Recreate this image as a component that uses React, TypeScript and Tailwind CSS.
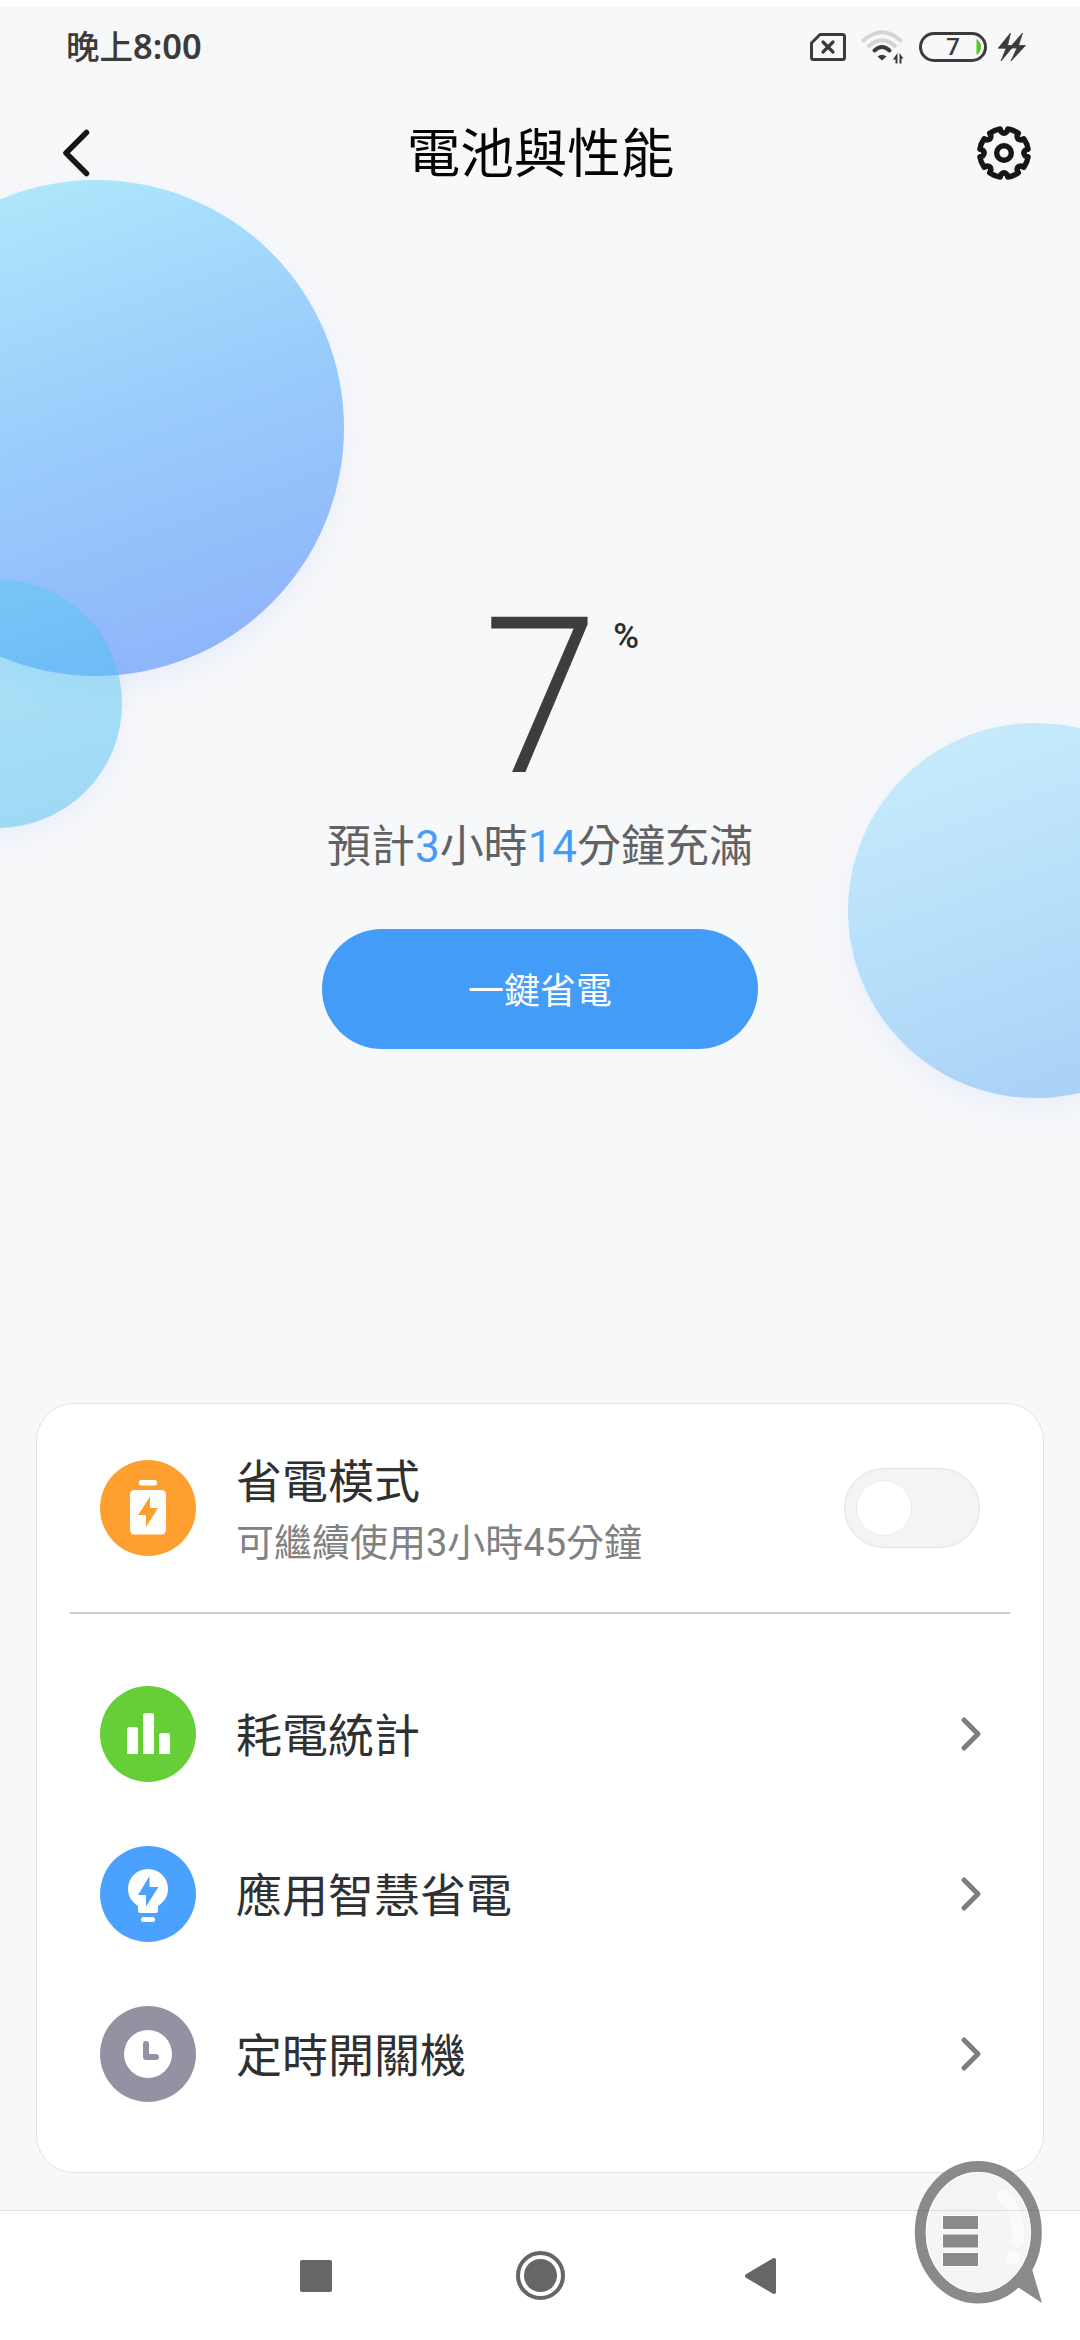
import type { ReactNode } from "react";

const menuItems = [
  { label: "耗電統計", color: "bg-[#66cf38]", icon: <ChartIcon /> },
  { label: "應用智慧省電", color: "bg-[#4ba2fe]", icon: <BulbIcon /> },
  { label: "定時開關機", color: "bg-[#9292a2]", icon: <ClockIcon /> },
];

// Outline of the settings gear: eight teeth with a small notch between each
function gearPath() {
  const point = (radius: number, deg: number) => {
    const rad = (deg * Math.PI) / 180;
    return `${(28 + radius * Math.sin(rad)).toFixed(2)} ${(28 - radius * Math.cos(rad)).toFixed(2)}`;
  };
  let d = `M${point(24.4, 9)}`;
  for (let i = 0; i < 8; i++) {
    const a = i * 45;
    d += `A24.4 24.4 0 0 1 ${point(24.4, a + 36)}`;
    d += `L${point(21.4, a + 37.5)}Q${point(18.6, a + 45)} ${point(21.4, a + 52.5)}L${point(24.4, a + 54)}`;
  }
  return d + "Z";
}

function BatteryIcon() {
  return (
    <svg width="96" height="96" viewBox="0 0 96 96" fill="#fff">
      <rect x="39" y="20" width="18" height="5.5" rx="2" />
      <rect x="30" y="30" width="36" height="44.5" rx="4.5" />
      <path d="M50 36.5 38 55h8v12l12-19h-8z" fill="#ff9f30" />
    </svg>
  );
}

function ChartIcon() {
  return (
    <svg width="96" height="96" viewBox="0 0 96 96" fill="#fff">
      <path d="M27 68V43.500q0-2.500 2.500-2.500h6q2.500 0 2.500 2.500V68z" />
      <path d="M43 68V29.500q0-2.500 2.500-2.500h6q2.500 0 2.500 2.500V68z" />
      <path d="M59 68V49.500q0-2.500 2.500-2.500h6q2.500 0 2.500 2.500V68z" />
    </svg>
  );
}

function BulbIcon() {
  return (
    <svg width="96" height="96" viewBox="0 0 96 96" fill="#fff">
      <path d="M48 23a20 20 0 0 0-20 20c0 7 3.500 12.500 10 17v5q0 2 2 2h16q2 0 2-2v-5c6.500-4.500 10-10 10-17a20 20 0 0 0-20-20z" />
      <rect x="41" y="71" width="14" height="5" rx="2.500" />
      <path d="M49.500 30 38 49h8v11.500L58.500 41h-9z" fill="#4ba2fe" />
    </svg>
  );
}

function ClockIcon() {
  return (
    <svg width="96" height="96" viewBox="0 0 96 96">
      <circle cx="48" cy="48" r="24" fill="#fff" />
      <path d="M46 38v13h10" fill="none" stroke="#9292a2" strokeWidth="6" strokeLinecap="round" strokeLinejoin="round" />
    </svg>
  );
}

function RoundIcon({ color, children }: { color: string; children: ReactNode }) {
  return <div className={`${color} size-24 shrink-0 rounded-full overflow-hidden`}>{children}</div>;
}

function StatusBar() {
  return (
    <div className="flex h-[80px] items-center justify-between pl-[66px] pr-[53px] text-[#3b3b3c]">
      <span className="pb-[2px] text-[33.500px] leading-none font-medium">
        晚上<span className="font-['Noto_Sans',sans-serif] text-[34.500px] font-semibold">8:00</span>
      </span>
      <div className="flex items-center">
        {/* No SIM */}
        <svg className="mr-[14px]" width="38" height="30" viewBox="0 0 38 30" fill="none" stroke="currentColor" strokeWidth="3">
          <path d="M11 2.500h22.500q2 0 2 2v21q0 2-2 2H4.500q-2 0-2-2V11z" strokeLinejoin="round" />
          <path d="M14 10l10 10M24 10L14 20" strokeWidth="3.200" strokeLinecap="round" />
        </svg>
        {/* Wi-Fi */}
        <svg className="mr-[15px]" width="43" height="34" viewBox="0 0 43 34" fill="none" strokeLinecap="round">
          <path d="M2.500 10.500Q21 -6 39.500 10.500" stroke="#d3d4d6" strokeWidth="4" />
          <path d="M8 16Q21 4.500 34 16" stroke="#d3d4d6" strokeWidth="4" />
          <path d="M13.500 20.500Q21 13.500 28.500 20.500" stroke="currentColor" strokeWidth="4" />
          <path d="M16.500 26.500Q21 23 25.500 26.500L21 30.500z" fill="currentColor" />
          <path d="M36.500 23v10.500h-2v-4h-2.700zM38.500 33.500V23l4 5.500h-2v5z" fill="currentColor" />
        </svg>
        <div className="mr-[10px] flex h-[30px] w-[68px] items-center justify-end rounded-full border-3 border-current">
          <span className="w-[42px] pr-[4px] text-center font-[Roboto] text-[24px] leading-none font-medium">7</span>
          <svg className="mr-[3px]" width="5" height="16" viewBox="0 0 5 16">
            <path d="M0.500 0q4.500 3 4.500 8t-4.500 8z" fill="#58c81e" />
          </svg>
        </div>
        {/* Fast charging */}
        <svg width="30" height="30" viewBox="0 0 30 30" fill="currentColor" stroke="currentColor" strokeWidth="0.800">
          <path d="M13.500 1 1.200 16.200h8L4 29l13-15.500h-6.500z" />
          <path d="M25.500 1 12.500 16h7.500l-6 13L28.500 13.500h-7z" />
        </svg>
      </div>
    </div>
  );
}

function TitleBar() {
  return (
    <div className="flex h-[132px] items-center justify-between pl-[60px] pr-[48px]">
      <svg width="32" height="52" viewBox="0 0 32 52" fill="none" stroke="#161616" strokeWidth="5.500" strokeLinecap="round" strokeLinejoin="round">
        <path d="M26.500 5.500 6 26l20.500 20.500" />
      </svg>
      <h1 className="pb-[6px] pl-[13px] text-[53.500px] leading-none text-[#050505]">電池與性能</h1>
      <svg width="56" height="56" viewBox="0 0 56 56" fill="none" stroke="#161616" strokeWidth="5.400">
        <path d={gearPath()} strokeLinejoin="round" />
        <circle cx="28" cy="28" r="7.300" />
      </svg>
    </div>
  );
}

function Bubbles() {
  return (
    <div className="pointer-events-none absolute inset-0 overflow-hidden">
      <div className="absolute left-[-152px] top-[180px] size-[496px] rounded-full bg-linear-[160deg,#afe9fb_8%,#9accfb_50%,#8fb4fa_92%] shadow-[0_12px_28px_rgba(110,145,250,0.1)]" />
      <div className="absolute left-[-127px] top-[579px] size-[249px] rounded-full bg-linear-[165deg,#58cff473,#30b0ee73] shadow-[0_10px_24px_rgba(110,145,250,0.09)]" />
      <div className="absolute left-[848px] top-[723px] size-[375px] rounded-full bg-linear-[160deg,#c6ebfb_8%,#b7dffa_50%,#a9d0f6_92%] shadow-[0_10px_28px_rgba(110,145,250,0.09)]" />
    </div>
  );
}

function ChatButton() {
  return (
    <svg className="absolute left-[912px] top-[2158px]" width="134" height="148" viewBox="0 0 134 148">
      <path d="M119 108 130 145 98 124z" fill="#8a8a8a" />
      <ellipse cx="66.300" cy="74.300" rx="58" ry="65.700" fill="#f3f3f4" fillOpacity="0.85" stroke="#8a8a8a" strokeWidth="11" />
      <ellipse cx="66.300" cy="74.300" rx="52.200" ry="60" fill="none" stroke="#fff" strokeWidth="1" />
      <path d="M91 38q16 12 15 46" fill="none" stroke="#fff" strokeOpacity="0.6" strokeWidth="12" strokeLinecap="round" />
      <circle cx="101" cy="100" r="7" fill="#fff" fillOpacity="0.6" />
      <g fill="#8a8a8a" stroke="#fff">
        <rect x="30.500" y="57.500" width="36" height="14" />
        <rect x="30.500" y="76" width="36" height="14" />
        <rect x="30.500" y="94.500" width="36" height="14" />
      </g>
      <path d="M4 52.500h125" stroke="#000" strokeOpacity="0.08" />
    </svg>
  );
}

export default function App() {
  return (
    <div
      lang="zh-Hant"
      className="relative flex h-[2340px] w-[1080px] flex-col overflow-hidden border-t-7 border-white bg-[#f7f8fa] font-['Noto_Sans_CJK_TC',sans-serif]"
    >
      <div className="absolute inset-x-0 -top-[7px] bottom-0">
        <Bubbles />
      </div>

      <div className="relative flex flex-1 flex-col">
        <StatusBar />
        <TitleBar />

        {/* Battery level */}
        <div className="flex flex-col items-center pt-[395px]">
          <div className="flex h-[168px] items-start pl-[43px] font-[Roboto]">
            <span className="origin-left scale-x-[0.94] text-[217px] leading-[168px] font-light text-[#3d3d3e] [-webkit-text-stroke:0.8px_#3d3d3e]">7</span>
            <span className="ml-[9px] pt-[3px] text-[35px] leading-[40px] font-medium text-[#2b2d2d]">%</span>
          </div>
          <p className="mt-[32px] font-[Roboto,'Noto_Sans_CJK_TC',sans-serif] text-[44px] leading-[66px] text-[#616264]">
            預計<span className="text-[#449cf9]">3</span>小時<span className="text-[#449cf9]">14</span>分鐘充滿
          </p>
          <button className="mt-[49px] h-[120px] w-[436px] rounded-full bg-[#449cf9] pb-[3px] text-[36px] text-white">一鍵省電</button>
        </div>

        {/* Options */}
        <div className="mx-9 mt-auto mb-[37px] h-[770px] rounded-[38px] border border-[#e2e3e5] bg-white">
          <div className="mx-[33px] flex h-[210px] items-center border-b-2 border-[#cbcccd] pl-[30px] pr-[30px]">
            <RoundIcon color="bg-[#ff9f30]">
              <BatteryIcon />
            </RoundIcon>
            <div className="ml-10 flex-1 pt-[5px]">
              <div className="text-[46px] leading-[54px] text-[#303031]">省電模式</div>
              <div className="mt-[10px] font-[Roboto,'Noto_Sans_CJK_TC',sans-serif] text-[38px] leading-[56px] text-[#808182]">
                可繼續使用3小時45分鐘
              </div>
            </div>
            <button role="switch" aria-checked="false" className="flex h-20 w-[136px] items-center rounded-full border border-[#e2e2e2] bg-[#f4f4f4] pl-[11px]">
              <span className="size-14 rounded-full border border-[#eaeaea] bg-white" />
            </button>
          </div>
          <div className="pt-[40px]">
            {menuItems.map((item) => (
              <div key={item.label} className="flex h-40 items-center pl-[63px] pr-[60px]">
                <RoundIcon color={item.color}>{item.icon}</RoundIcon>
                <div className="ml-10 flex-1 pb-[4px] text-[46px] leading-none text-[#303031]">{item.label}</div>
                <svg width="24" height="40" viewBox="0 0 24 40" fill="none" stroke="#7e7e7f" strokeWidth="5" strokeLinecap="round" strokeLinejoin="round">
                  <path d="M5 6l14 14L5 34" />
                </svg>
              </div>
            ))}
          </div>
        </div>
      </div>

      {/* Navigation keys */}
      <div className="relative h-[130px] shrink-0 border-t border-[#dfe0e1] bg-white">
        <div className="flex h-full items-center pl-[300px]">
          <div className="size-8 rounded-[2px] bg-[#666]" />
          <div className="ml-[184px] flex size-[49px] items-center justify-center rounded-full border-4 border-[#666]">
            <div className="size-[33px] rounded-full bg-[#666]" />
          </div>
          <svg className="ml-[180px]" width="31" height="36" viewBox="0 0 31 36">
            <path d="M29 2v32L2 18z" fill="#666" stroke="#666" strokeWidth="4" strokeLinejoin="round" />
          </svg>
        </div>
      </div>

      <div className="absolute inset-x-0 -top-[7px] h-0">
        <ChatButton />
      </div>
    </div>
  );
}
